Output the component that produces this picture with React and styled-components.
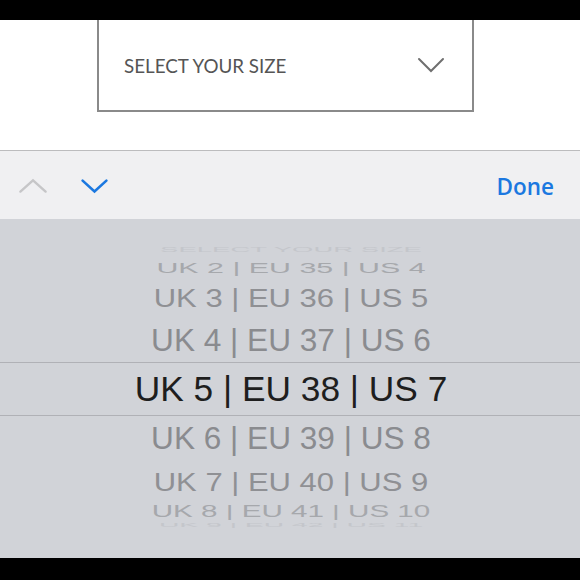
import React from "react";
import styled, { createGlobalStyle } from "styled-components";

const Global = createGlobalStyle`
  html, body { margin: 0; padding: 0; background: #000; }
  #root { width: 580px; height: 580px; overflow: hidden; }
`;

const Screen = styled.div`
  width: 580px;
  height: 580px;
  display: flex;
  flex-direction: column;
  background: #000;
`;

const BlackBar = styled.div`
  height: ${(p) => p.$h}px;
  background: #000;
  flex: none;
`;

const Page = styled.div`
  height: 130px;
  background: #fff;
  flex: none;
`;

const SelectBox = styled.div`
  margin-left: 97px;
  width: 377px;
  height: 92px;
  box-sizing: border-box;
  border: 2px solid #8a8a8a;
  border-top: none;
  display: flex;
  align-items: center;
  justify-content: space-between;
  padding: 0 27px 0 25px;
`;

const SelectLabel = styled.span`
  font-family: Lato, "Open Sans", sans-serif;
  font-size: 18.8px;
  color: #555;
  margin-top: 1px;
`;

const Toolbar = styled.div`
  height: 68px;
  flex: none;
  border-top: 1px solid #bcbcbe;
  background: #f0f0f2;
  display: flex;
  align-items: center;
  padding: 0 26px 0 18px;
`;

const NavGroup = styled.div`
  display: flex;
  align-items: center;
  gap: 32px;
  margin-top: 1px;
`;

const DoneButton = styled.span`
  margin-left: auto;
  font-family: "Open Sans", "Liberation Sans", sans-serif;
  font-weight: 600;
  font-size: 22.5px;
  color: #1b78e0;
  margin-top: 2px;
`;

const Picker = styled.div`
  flex: 1;
  background: #d1d3d8;
  padding-top: 23px;
  display: flex;
  flex-direction: column;
`;

const Row = styled.div`
  height: ${(p) => p.$h}px;
  flex: none;
  display: flex;
  align-items: center;
  justify-content: center;
  box-sizing: border-box;
  ${(p) =>
    p.$selected &&
    `border-top: 1px solid #b0b1b6; border-bottom: 1px solid #b0b1b6;`}
`;

const RowLabel = styled.span`
  font-family: "Liberation Sans", Arial, sans-serif;
  font-size: ${(p) => p.$size}px;
  line-height: 1;
  color: ${(p) => p.$color};
  white-space: nowrap;
  transform: scaleY(${(p) => p.$scale});
  margin-left: 2px;
`;

const rows = [
  { label: "SELECT YOUR SIZE", h: 16, size: 27.5, scale: 0.24, color: "#c4c6cb" },
  { label: "UK 2 | EU 35 | US 4", h: 19, size: 30.4, scale: 0.5, color: "#a6a8ac" },
  { label: "UK 3 | EU 36 | US 5", h: 42, size: 31, scale: 0.81, color: "#8f9094" },
  { label: "UK 4 | EU 37 | US 6", h: 43, size: 31.6, scale: 0.98, color: "#8a8b8f" },
  { label: "UK 5 | EU 38 | US 7", h: 54, size: 35.3, scale: 1, color: "#1e1e1e", selected: true },
  { label: "UK 6 | EU 39 | US 8", h: 45, size: 31.6, scale: 0.98, color: "#8a8b8f" },
  { label: "UK 7 | EU 40 | US 9", h: 42, size: 31, scale: 0.81, color: "#8f9094" },
  { label: "UK 8 | EU 41 | US 10", h: 16, size: 29.6, scale: 0.56, color: "#a6a8ac" },
  { label: "UK 9 | EU 42 | US 11", h: 12, size: 28.3, scale: 0.22, color: "#c4c6cb" },
];

const Chevron = ({ up, color, w, h, sw }) => (
  <svg width={w} height={h} viewBox={`0 0 ${w} ${h}`} fill="none">
    <path
      d={
        up
          ? `M${sw} ${h - sw} L${w / 2} ${sw} L${w - sw} ${h - sw}`
          : `M${sw} ${sw} L${w / 2} ${h - sw} L${w - sw} ${sw}`
      }
      stroke={color}
      strokeWidth={sw}
      strokeLinecap="round"
      strokeLinejoin="miter"
    />
  </svg>
);

export default function App() {
  return (
    <>
      <Global />
      <Screen>
        <BlackBar $h={20} />
        <Page>
          <SelectBox>
            <SelectLabel>SELECT YOUR SIZE</SelectLabel>
            <Chevron color="#6f6f6f" w={28} h={16} sw={2} />
          </SelectBox>
        </Page>
        <Toolbar>
          <NavGroup>
            <Chevron up color="#c6c6c8" w={30} h={16} sw={2.4} />
            <Chevron color="#1b78e0" w={29} h={16} sw={2.6} />
          </NavGroup>
          <DoneButton>Done</DoneButton>
        </Toolbar>
        <Picker>
          {rows.map((r) => (
            <Row key={r.label} $h={r.h} $selected={r.selected}>
              <RowLabel $size={r.size} $scale={r.scale} $color={r.color}>
                {r.label}
              </RowLabel>
            </Row>
          ))}
        </Picker>
        <BlackBar $h={22} />
      </Screen>
    </>
  );
}
